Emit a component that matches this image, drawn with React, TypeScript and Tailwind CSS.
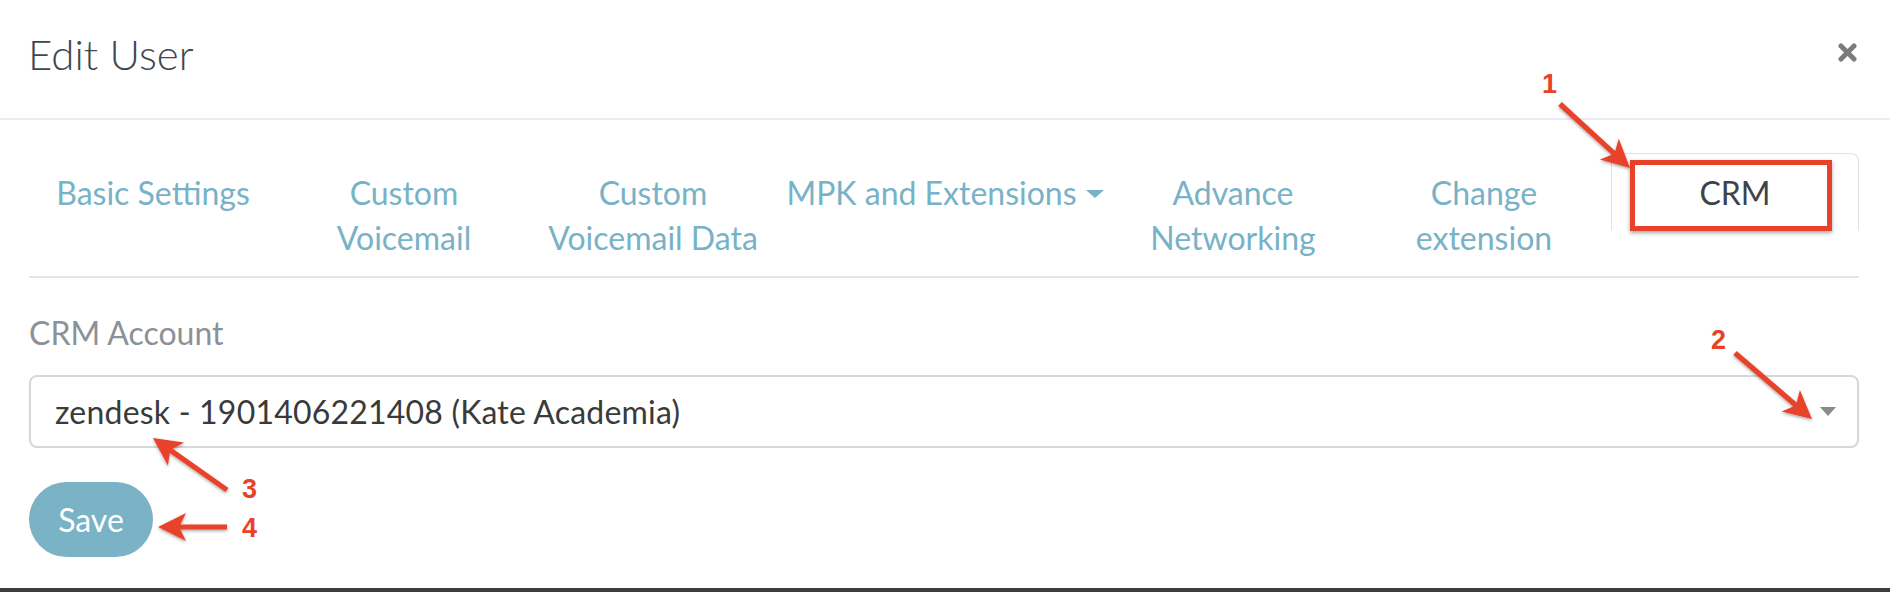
import React from "react";

type P = [number, number];

function arrowPoints(tail: P, tip: P, headLen = 28, headW = 14, shaft = 2.6): string {
  const [x1, y1] = tail;
  const [x2, y2] = tip;
  const dx = x2 - x1;
  const dy = y2 - y1;
  const len = Math.hypot(dx, dy);
  const ux = dx / len;
  const uy = dy / len;
  const px = -uy;
  const py = ux;
  const bx = x2 - ux * headLen;
  const by = y2 - uy * headLen;
  const nx = x2 - ux * headLen * 0.8;
  const ny = y2 - uy * headLen * 0.8;
  const pts: P[] = [
    [x1 + px * shaft, y1 + py * shaft],
    [nx + px * shaft, ny + py * shaft],
    [bx + px * headW, by + py * headW],
    [x2, y2],
    [bx - px * headW, by - py * headW],
    [nx - px * shaft, ny - py * shaft],
    [x1 - px * shaft, y1 - py * shaft],
  ];
  return pts.map((p) => `${p[0].toFixed(1)},${p[1].toFixed(1)}`).join(" ");
}

const arrows: { tail: P; tip: P }[] = [
  { tail: [1560, 104], tip: [1630, 168] },
  { tail: [1735, 353], tip: [1812, 419] },
  { tail: [227, 490], tip: [153, 438] },
  { tail: [227, 527], tip: [158, 527] },
];

function Tab({
  w,
  active,
  children,
}: {
  w: string;
  active?: boolean;
  children: React.ReactNode;
}) {
  return (
    <div
      className={
        active
          ? `${w} shrink-0 border border-b-0 border-[#dfe3e7] rounded-t-[8px] bg-white pt-[16px] pb-[15px] text-center text-[#3d434b]`
          : `${w} shrink-0 border border-b-0 border-transparent pt-[16px] pb-[16px] text-center text-[#78b2c7]`
      }
    >
      {children}
    </div>
  );
}

export default function App() {
  return (
    <div className="relative w-[1890px] h-[592px] overflow-hidden bg-white font-['Lato',sans-serif]">
      <div className="flex flex-col h-[588px]">
        {/* Header */}
        <div className="flex items-start justify-between h-[120px] pl-[28px] pr-[33px] pt-[33px] border-b-2 border-[#ebebf0]">
          <div className="text-[42px] leading-[42px] font-light text-[#40464f]">Edit User</div>
          <svg width="19" height="19" viewBox="0 0 19 19" className="mt-[10px]">
            <line x1="3" y1="3" x2="16" y2="16" stroke="#7b7b7b" strokeWidth="5" strokeLinecap="round" />
            <line x1="16" y1="3" x2="3" y2="16" stroke="#7b7b7b" strokeWidth="5" strokeLinecap="round" />
          </svg>
        </div>

        {/* Body */}
        <div className="pl-[29px] pr-[31px]">
          <div className="mt-[33px] flex items-start border-b-2 border-[#e1e6ea] text-[32px] leading-[45px]">
            <Tab w="w-[248px]">Basic Settings</Tab>
            <Tab w="w-[254px]">
              Custom
              <br />
              Voicemail
            </Tab>
            <Tab w="w-[244px]">
              Custom
              <br />
              Voicemail Data
            </Tab>
            <Tab w="w-[340px]">
              <span>MPK and Extensions</span>
              <span className="inline-block ml-[9px] mb-[6px] align-middle w-0 h-0 border-t-[8px] border-x-[9px] border-x-transparent border-t-[#78b2c7]" />
            </Tab>
            <Tab w="w-[236px]">
              Advance
              <br />
              Networking
            </Tab>
            <Tab w="w-[260px]">
              <div className="pl-[6px]">
                Change
                <br />
                extension
              </div>
            </Tab>
            <Tab w="w-[248px]" active>
              CRM
            </Tab>
          </div>

          <div className="mt-[32px] text-[32px] leading-[45px] text-[#8b9198]">CRM Account</div>

          <div className="mt-[20px] h-[73px] border-2 border-[#d4d8dc] rounded-[8px] flex items-center justify-between pl-[24px] pr-[21px]">
            <span className="text-[32px] leading-[45px] tracking-[0.2px] text-[#3a3a3a]">
              zendesk - 1901406221408 (Kate Academia)
            </span>
            <span className="w-0 h-0 border-t-[9px] border-x-[8px] border-x-transparent border-t-[#8a8a8a]" />
          </div>

          <button className="mt-[34px] h-[75px] w-[124px] rounded-full bg-[#7ab2c6] text-white text-[32px] leading-[45px] flex items-center justify-center">
            Save
          </button>
        </div>
      </div>
      <div className="h-[4px] bg-[#3d3d3d]" />

      {/* Annotation overlays */}
      <div className="absolute left-[1630px] top-[160px] w-[202px] h-[71px] border-[5px] border-[#e8432a] shadow-[0_2px_4px_rgba(0,0,0,0.35)]" />
      <svg className="absolute left-0 top-0 pointer-events-none" width="1890" height="592">
        <defs>
          <filter id="sh" x="-20%" y="-20%" width="140%" height="140%">
            <feDropShadow dx="0" dy="1.5" stdDeviation="1.5" floodColor="#000" floodOpacity="0.35" />
          </filter>
        </defs>
        {arrows.map((a, i) => (
          <polygon key={i} points={arrowPoints(a.tail, a.tip)} fill="#e8432a" filter="url(#sh)" />
        ))}
      </svg>
      <div className="absolute left-[1542px] top-[71px] text-[27px] leading-none font-bold text-[#e8432a] font-['Liberation_Sans',sans-serif]">1</div>
      <div className="absolute left-[1711px] top-[327px] text-[27px] leading-none font-bold text-[#e8432a] font-['Liberation_Sans',sans-serif]">2</div>
      <div className="absolute left-[242px] top-[476px] text-[27px] leading-none font-bold text-[#e8432a] font-['Liberation_Sans',sans-serif]">3</div>
      <div className="absolute left-[242px] top-[515px] text-[27px] leading-none font-bold text-[#e8432a] font-['Liberation_Sans',sans-serif]">4</div>
    </div>
  );
}
